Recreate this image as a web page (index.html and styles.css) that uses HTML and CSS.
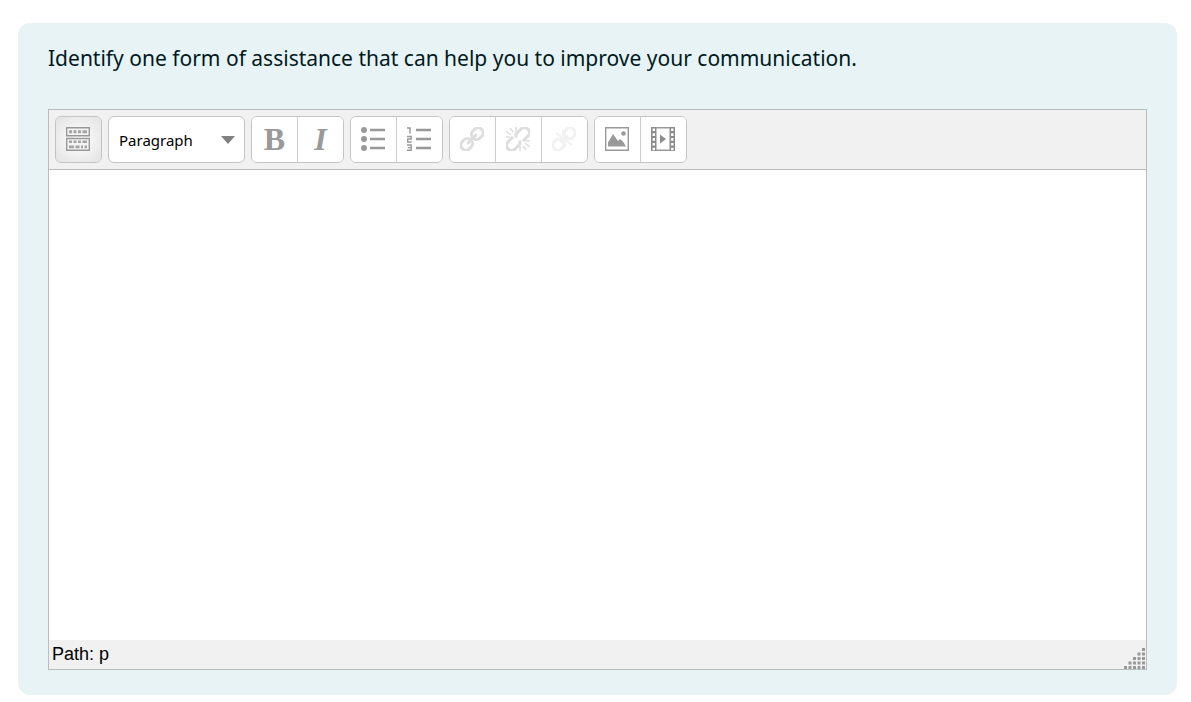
FILE: index.html
```html
<!DOCTYPE html>
<html lang="en">
<head>
    <meta charset="UTF-8">
    <meta name="viewport" content="width=device-width, initial-scale=1.0">
    <title>Question</title>
    <link rel="stylesheet" href="styles.css">
</head>
<body>

<main class="question">
    <label class="prompt" for="answer">Identify one form of assistance that can help you to improve your communication.</label>

    <div class="editor">
        <div class="toolbar" role="toolbar" aria-label="Editor">
            <div class="group">
                <button class="tool toggle" type="button" aria-label="Toggle toolbar">
                    <svg class="icon" viewBox="0 0 24 24">
                        <path d="M.7 .7h22.600v8H.7zM.7 11.500h22.600v11.800H.7z" fill="#f4f4f4" stroke="#999" stroke-width="1.400"/>
                        <path d="M3 4.700h3m1.500 0h3m1.500 0h3m1.500 0h4.500" stroke="#a4a4a4" stroke-width="3"/>
                        <path d="M3 14.700h3m1.500 0h3m1.500 0h3m1.500 0h4.500" stroke="#a4a4a4" stroke-width="2.600"/>
                        <path d="M3 19.800h5m1.500 0h4m1.500 0h2m1.500 0h2.500" stroke="#a4a4a4" stroke-width="2.800"/>
                    </svg>
                </button>
            </div>
            <div class="group format">
                <select class="format-select" aria-label="Format">
                    <option>Paragraph</option>
                    <option>Heading (large)</option>
                    <option>Heading (medium)</option>
                    <option>Heading (small)</option>
                </select>
            </div>
            <div class="group">
                <button class="tool letter" type="button" aria-label="Bold">B</button>
                <button class="tool letter italic" type="button" aria-label="Italic">I</button>
            </div>
            <div class="group">
                <button class="tool" type="button" aria-label="Unordered list">
                    <svg class="icon" viewBox="0 0 24 24">
                        <g fill="#999"><circle cx="3" cy="3" r="3"/><circle cx="3" cy="12" r="3"/><circle cx="3" cy="21" r="3"/></g>
                        <path d="M9 3h15M9 12h15M9 21h15" stroke="#999" stroke-width="2.600"/>
                    </svg>
                </button>
                <button class="tool" type="button" aria-label="Ordered list">
                    <svg class="icon" viewBox="0 0 24 24">
                        <path d="M9 3h15M9 12h15M9 21h15" stroke="#999" stroke-width="2.600"/>
                        <path d="M0 1h3v5.500M0 9.500h4.200v2.500h-3.500v3h4M0 18h4.200v5.300h-4.200M.8 20.600h3.400" fill="none" stroke="#999" stroke-width="1.400"/>
                    </svg>
                </button>
            </div>
            <div class="group">
                <button class="tool" type="button" aria-label="Insert link" disabled>
                    <svg class="icon" viewBox="0 0 24 24">
                        <g transform="rotate(-45 12 12)" fill="none" stroke="#dedede" stroke-width="3">
                            <rect x="-1.500" y="7" width="12" height="10" rx="4.500"/>
                            <rect x="13.500" y="7" width="12" height="10" rx="4.500"/>
                            <path d="M6.500 12h11" stroke-linecap="round"/>
                        </g>
                    </svg>
                </button>
                <button class="tool" type="button" aria-label="Unlink" disabled>
                    <svg class="icon" viewBox="0 0 24 24">
                        <g transform="rotate(-45 12 12)" fill="none" stroke="#dedede" stroke-width="3">
                            <path d="M10 7H3a5 5 0 0 0 0 10h5a4 4 0 0 0 4-3M14 17h7a5 5 0 0 0 0-10h-5a4 4 0 0 0-4 3"/>
                        </g>
                        <path d="M10 0v5M4 1l3 4M0 4l5 4M0 10h4M14 19v5M17 19l3 4M19 16l5 4M20 14h4" stroke="#dedede" stroke-width="1.500"/>
                    </svg>
                </button>
                <button class="tool" type="button" aria-label="Prevent automatic linking" disabled>
                    <svg class="icon" viewBox="0 0 24 24">
                        <g transform="rotate(-45 12 12)" fill="none" stroke="#f2f2f2" stroke-width="3">
                            <rect x="-1.500" y="7" width="11" height="10" rx="4.500"/>
                            <rect x="14.500" y="7" width="11" height="10" rx="4.500"/>
                            <path d="M7 12h10"/>
                        </g>
                        <path d="M4 6l16 12M11 3v6M13 15v6" stroke="#f2f2f2" stroke-width="2"/>
                    </svg>
                </button>
            </div>
            <div class="group">
                <button class="tool" type="button" aria-label="Insert image">
                    <svg class="icon" viewBox="0 0 24 24">
                        <path d="M.7 .7h22.600v22.600H.7z" fill="none" stroke="#999" stroke-width="1.400"/>
                        <circle cx="18.500" cy="6.500" r="2.300" fill="#999"/>
                        <path d="M3 19.500v-4l5-8.500 5 7 2-2 3 2.500 3 5z" fill="#999"/>
                    </svg>
                </button>
                <button class="tool" type="button" aria-label="Insert media">
                    <svg class="icon" viewBox="0 0 24 24">
                        <path d="M0 0h5.500v24H0zM18.500 0H24v24h-5.500z" fill="#8c8c8c"/>
                        <path d="M5 .7h14M5 23.300h14" stroke="#999" stroke-width="1.400"/>
                        <path d="M2.800 1.500v22M21.300 1.500v22" stroke="#fff" stroke-width="2.400" stroke-dasharray="2.600 2.200"/>
                        <path d="M9 7.500v9l6-4.500z" fill="#8c8c8c"/>
                    </svg>
                </button>
            </div>
        </div>

        <textarea class="content" id="answer"></textarea>

        <div class="statusbar">
            <span class="path">Path: p</span>
            <svg class="grip" viewBox="0 0 22 22">
                <path d="M0 20.500h22M4.500 16h17.500M9 11.500h13M13.500 7h8.500M18 2.500h4" stroke="#999" stroke-width="3" stroke-dasharray="3 1.500"/>
            </svg>
        </div>
    </div>
</main>

</body>
</html>
```
FILE: styles.css
```css
* {
    box-sizing: border-box;
}
body {
    margin: 23px 14px 7px 18px;
    background: #fff;
}
.question {
    padding: 18px 30px 25px;
    border-radius: 12px;
    background: #e7f3f5;
}
.prompt {
    display: block;
    margin-bottom: 34px;
    color: #001a1e;
    font-family: "Segoe UI", "Noto Sans", "Open Sans", sans-serif;
    font-size: 21px;
    line-height: 34px;
}
.editor {
    border: 1px solid #bbb;
    background: #f1f1f1;
}
.toolbar {
    display: flex;
    flex-wrap: wrap;
    gap: 6px;
    padding: 6px;
    border-bottom: 1px solid #bbb;
}
.group {
    display: flex;
    height: 47px;
    overflow: hidden;
    border: 1px solid #c4c4c4;
    border-radius: 6px;
    background: #fff;
}
.tool {
    box-sizing: content-box;
    width: 45px;
    height: 45px;
    padding: 0;
    border: 0;
    background: #fff;
    color: #999;
}
.tool + .tool {
    border-left: 1px solid #ccc;
}
.toggle {
    background: radial-gradient(#fff, #e2e2e2);
}
.icon {
    display: block;
    width: 24px;
    height: 24px;
    margin: 0 0 1px 10px;
}
.letter {
    font-family: "Liberation Serif", serif;
    font-size: 32px;
    font-weight: bold;
    line-height: 45px;
}
.italic {
    font-style: italic;
}
.format {
    position: relative;
}
.format-select {
    width: 135px;
    padding: 0 30px 0 10px;
    border: 0;
    appearance: none;
    background: transparent;
    color: #000;
    font-family: Tahoma, "Noto Sans", "Open Sans", sans-serif;
    font-size: 15px;
}
/* drop-down arrow */
.format::after {
    content: "";
    position: absolute;
    top: 19px;
    right: 9px;
    border: 7px solid transparent;
    border-top: 8px solid #808080;
    border-bottom: 0;
    pointer-events: none;
}
.content {
    display: block;
    width: 100%;
    height: 470px;
    padding: 8px;
    border: 0;
    outline: 0;
    resize: none;
    background: #fff;
    font-family: "Liberation Sans", Arial, sans-serif;
    font-size: 16px;
}
.statusbar {
    display: flex;
    justify-content: space-between;
    align-items: flex-end;
    height: 29px;
}
.path {
    padding-left: 3px;
    color: #000;
    font-family: Arial, "Liberation Sans", sans-serif;
    font-size: 18px;
    line-height: 29px;
}
.grip {
    width: 22px;
    height: 22px;
}
```
